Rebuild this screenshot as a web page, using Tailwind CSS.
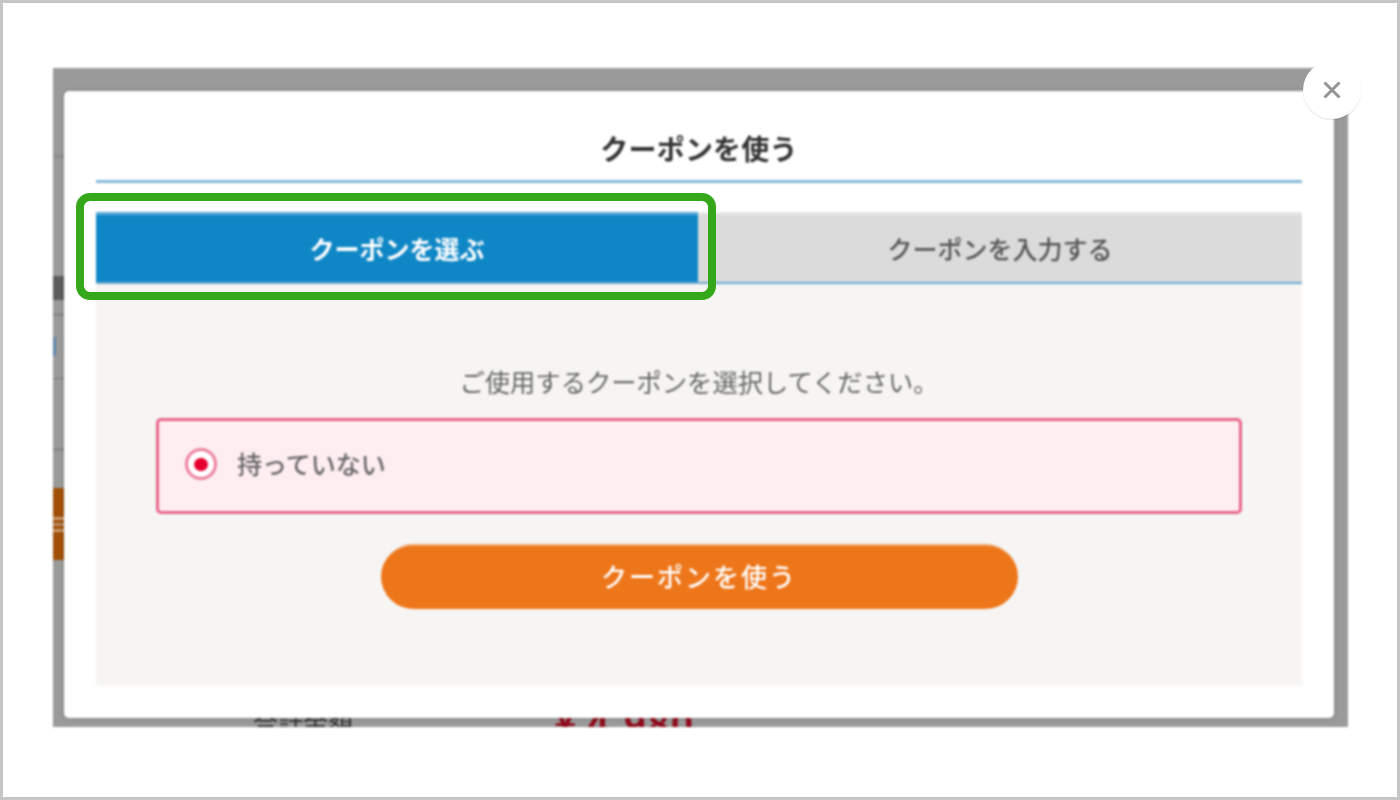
<!DOCTYPE html>
<html lang="ja">
<head>
  <meta charset="UTF-8" />
  <title>クーポンを使う</title>
  <script src="https://cdn.jsdelivr.net/npm/@tailwindcss/browser@4"></script>
</head>
<body class="bg-white font-['Noto_Sans_CJK_JP','Noto_Sans',sans-serif] overflow-hidden">
  <div class="w-[1400px] h-[800px] border-[3px] border-[#c6c6c6] bg-white pl-[50px] pt-[65px] relative">

    <!-- dimmed page behind the modal -->
    <div class="relative w-[1295px] h-[659px] bg-[#9a9a9a] overflow-hidden pl-[11px] pt-[23px] blur-[0.8px]">
      <div class="absolute left-0 top-[87px] w-[11px] h-[3px] bg-[#8d8d8d]"></div>
      <div class="absolute left-0 top-[208px] w-[11px] h-[24px] bg-[#5c5c5c]"></div>
      <div class="absolute left-0 top-[245px] w-[11px] h-[3px] bg-[#8a8a8a]"></div>
      <div class="absolute left-0 top-[269px] w-[3px] h-[19px] bg-[#5f86ab]"></div>
      <div class="absolute left-0 top-[310px] w-[11px] h-[1px] bg-[#777777]"></div>
      <div class="absolute left-0 top-[380px] w-[11px] h-[3px] bg-[#8a8a8a]"></div>
      <div class="absolute left-0 top-[420px] w-[11px] h-[72px] bg-[#a04f08] flex flex-col justify-center gap-[3px]">
        <div class="h-[3px] bg-[#c89a70]"></div>
        <div class="h-[3px] bg-[#b98a62]"></div>
        <div class="h-[3px] bg-[#c89a70]"></div>
      </div>
      <span class="absolute left-[200px] top-[636px] text-[25px] leading-[36px] text-[#2d2d2d]">合計金額</span>
      <span class="absolute left-[501px] top-[630px] text-[38px] leading-[48px] font-bold tracking-[1px] text-[#8f0a1a] whitespace-nowrap">¥ 4,980</span>

      <!-- modal -->
      <div class="relative w-[1270px] h-[627px] bg-white rounded-[5px] shadow-[0_0_4px_rgba(0,0,0,0.2)] px-[32px]">
        <h2 class="h-[92px] pt-[33px] text-center text-[28px] leading-[48px] font-bold tracking-[0.2px] text-[#333333] border-b-[3px] border-[#85b9d8] box-border">クーポンを使う</h2>

        <div class="mt-[29px] flex h-[72px] border-b-[2px] border-[#6caad0]">
          <div class="w-[602px] bg-[#0f87c6] border-t-[3px] border-[#5aa9d8] text-white text-[25px] font-bold flex items-center justify-center">クーポンを選ぶ</div>
          <div class="flex-1 bg-[#dbdbdb] border-t-[3px] border-[#e6e6e6] text-[#555555] text-[25px] font-medium flex items-center justify-center">クーポンを入力する</div>
        </div>

        <div class="h-[402px] bg-[#f6f5f3] px-[60px] pt-[79px]">
          <p class="text-center text-[#666666] text-[25.3px] leading-[36px]">ご使用するクーポンを選択してください。</p>
          <label class="mt-[19px] h-[96px] flex items-center gap-[20px] pl-[26px] pb-[4px] bg-[#feedf1] border-[3px] border-[#e8668a] rounded-[5px]">
            <span class="w-[32px] h-[32px] rounded-full bg-white border-[3px] border-[#ec7f9c] flex items-center justify-center">
              <span class="w-[14px] h-[13px] rounded-full bg-[#e6002d]"></span>
            </span>
            <span class="text-[#666666] text-[25px] font-medium">持っていない</span>
          </label>
          <button class="block mx-auto mt-[30px] w-[637px] h-[65px] pb-[5px] rounded-full bg-[#ee761a] border-t-[2px] border-[#eea56b] text-white text-[26px] font-medium tracking-[2px]">クーポンを使う</button>
        </div>
      </div>
    </div>

    <!-- close button -->
    <button class="absolute left-[1300px] top-[58px] w-[58px] h-[58px] rounded-full bg-white shadow-[0_1px_1px_rgba(0,0,0,0.12)] flex items-center justify-center blur-[0.5px]">
      <svg width="18" height="18" viewBox="0 0 18 18" fill="none" stroke="#949494" stroke-width="3"><path d="M1.5 1.5 L16.5 16.5 M16.5 1.5 L1.5 16.5" /></svg>
    </button>

    <!-- green highlight -->
    <div class="absolute left-[73px] top-[190px] w-[640px] h-[107px] border-[8px] border-[#34a81a] rounded-[14px]"></div>
  </div>
</body>
</html>
